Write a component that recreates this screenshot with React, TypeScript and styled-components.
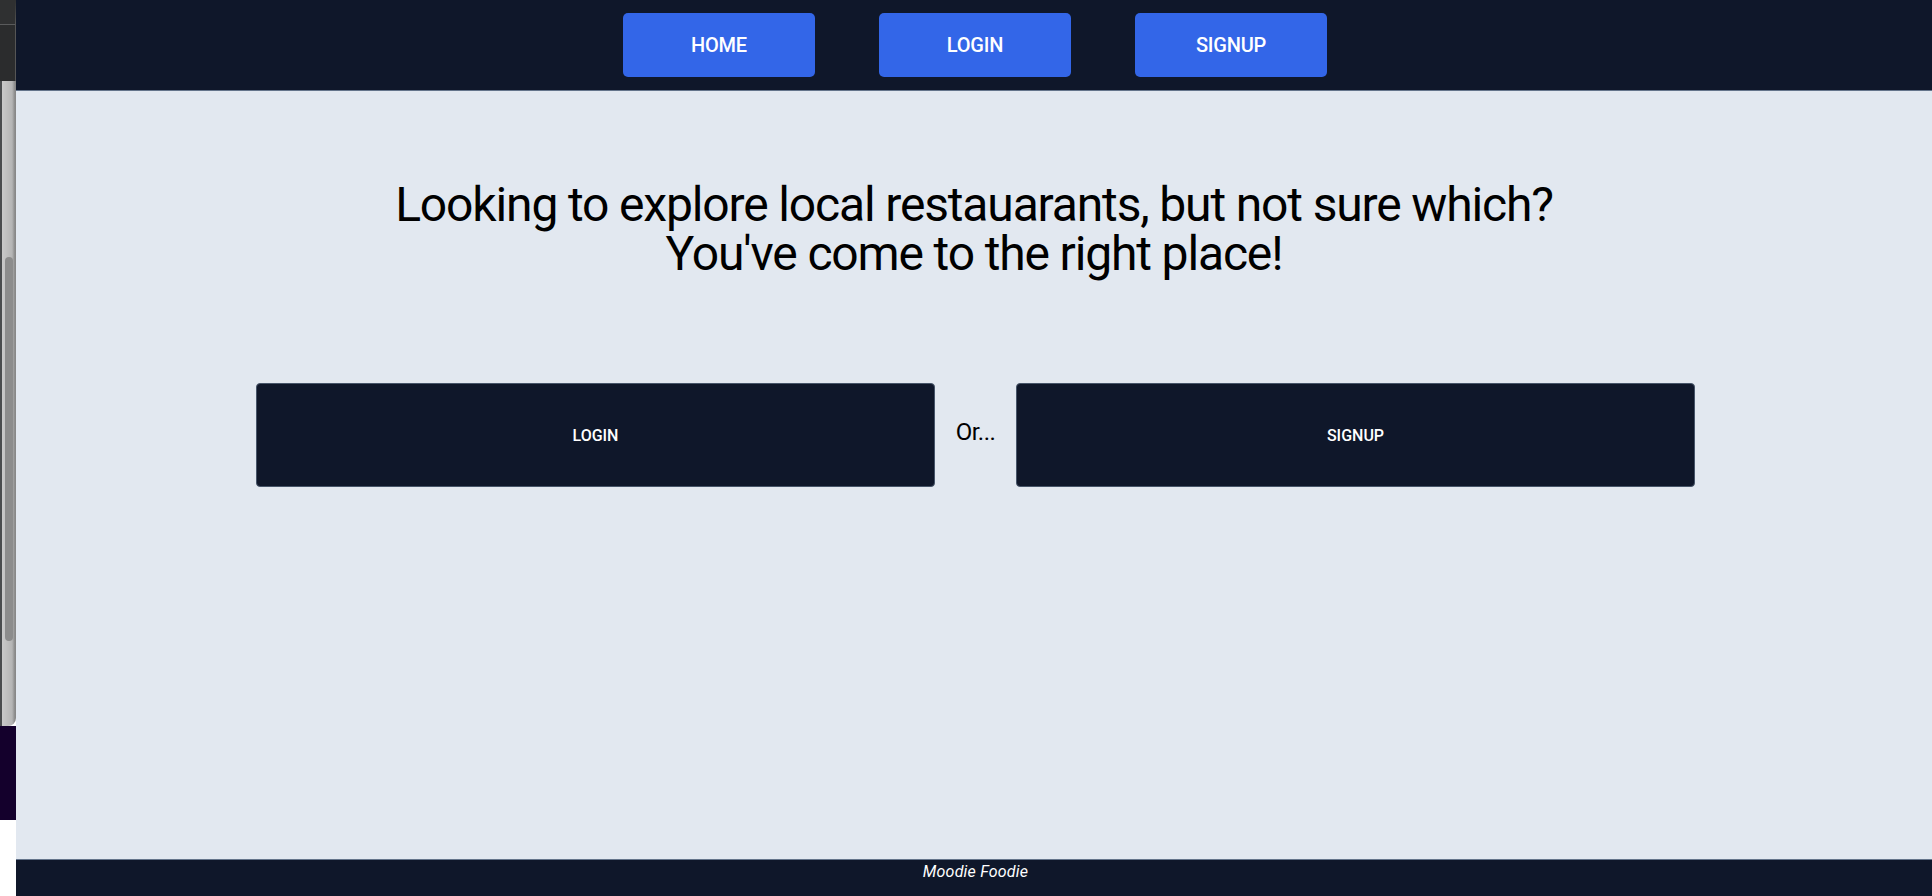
import React from "react";
import styled, { createGlobalStyle } from "styled-components";

const GlobalStyle = createGlobalStyle`
  * {
    box-sizing: border-box;
  }
  body {
    margin: 0;
    font-family: Roboto, "Noto Sans", "Liberation Sans", sans-serif;
    background-color: #ffffff;
  }
`;

export default function App() {
  return (
    <>
      <GlobalStyle />
      <Screen>
        <Gutter>
          <GutterTop />
          <Track>
            <Thumb />
          </Track>
          <GutterDark />
          <GutterBlank />
        </Gutter>

        <Page>
          <Nav>
            <NavButton>HOME</NavButton>
            <NavButton>LOGIN</NavButton>
            <NavButton>SIGNUP</NavButton>
          </Nav>

          <Main>
            <Heading>
              Looking to explore local restauarants, but not sure which?
              <br />
              You've come to the right place!
            </Heading>

            <Choices>
              <BigButton>LOGIN</BigButton>
              <Or>Or...</Or>
              <BigButton>SIGNUP</BigButton>
            </Choices>
          </Main>

          <Footer>
            <Brand>Moodie Foodie</Brand>
          </Footer>
        </Page>
      </Screen>
    </>
  );
}

const Screen = styled.div`
  display: flex;
  width: 100%;
  height: 100vh;
  overflow: hidden;
`;

const Gutter = styled.div`
  width: 16px;
  flex-shrink: 0;
  display: flex;
  flex-direction: column;
`;

const GutterTop = styled.div`
  height: 81px;
  background-color: #2b2c2d;
  border-top: 24px solid #2f3031;
  border-right: 1px solid #555;
  background-image: linear-gradient(#5a5b5c, #5a5b5c);
  background-size: 100% 1px;
  background-repeat: no-repeat;
`;

const Track = styled.div`
  height: 645px;
  padding: 176px 3px 0 5px;
  background: linear-gradient(90deg, #4a4c4e 0 2px, #c9c9c9 2px, #b5b5b5 12px, #888 15px);
  border-bottom-right-radius: 8px;
`;

const Thumb = styled.div`
  height: 384px;
  border-radius: 4px;
  background-color: #8c8c8c;
`;

const GutterDark = styled.div`
  height: 94px;
  background-color: #14002c;
`;

const GutterBlank = styled.div`
  flex: 1;
  background-color: #ffffff;
`;

const Page = styled.div`
  flex: 1;
  display: flex;
  flex-direction: column;
  background-color: #e2e8f0;
`;

const Nav = styled.nav`
  height: 91px;
  display: flex;
  justify-content: center;
  align-items: center;
  gap: 64px;
  padding-left: 2px;
  background-color: #0f172a;
  border-bottom: 1px solid #64748b;
`;

const NavButton = styled.button`
  width: 192px;
  height: 64px;
  border: none;
  border-radius: 5px;
  background-color: #3366e8;
  color: #ffffff;
  font-family: Roboto, "Liberation Sans", sans-serif;
  font-size: 20px;
  font-weight: 500;
  letter-spacing: -0.2px;
  cursor: pointer;
`;

const Main = styled.main`
  flex: 1;
  display: flex;
  flex-direction: column;
  align-items: center;
  padding-top: 89px;
`;

const Heading = styled.h1`
  margin: 0;
  font-size: 48px;
  line-height: 49px;
  font-weight: 400;
  color: #000000;
  text-align: center;
  letter-spacing: -1.15px;
`;

const Choices = styled.div`
  display: flex;
  align-items: center;
  margin-top: 105px;
  padding-left: 3px;
`;

const BigButton = styled.button`
  width: 679px;
  height: 104px;
  border: 1px solid #475569;
  border-radius: 4px;
  background-color: #0f172a;
  color: #ffffff;
  font-family: Roboto, "Liberation Sans", sans-serif;
  font-size: 16px;
  font-weight: 500;
  cursor: pointer;
`;

const Or = styled.span`
  width: 81px;
  margin-bottom: 6px;
  text-align: center;
  font-size: 24px;
  color: #000000;
  letter-spacing: -0.5px;
`;

const Footer = styled.footer`
  height: 37px;
  display: flex;
  justify-content: center;
  align-items: flex-start;
  padding-left: 3px;
  background-color: #0f172a;
  border-top: 1px solid #64748b;
`;

const Brand = styled.p`
  margin: 0;
  line-height: 24px;
  font-size: 16px;
  font-style: italic;
  letter-spacing: 0.2px;
  color: #ffffff;
`;
